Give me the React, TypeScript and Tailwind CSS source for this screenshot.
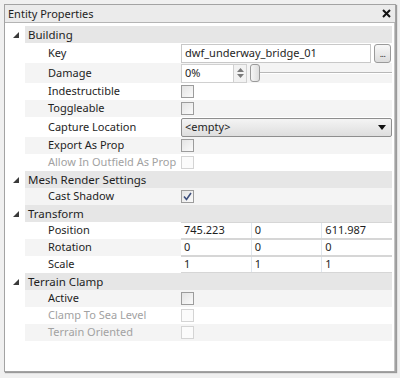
import React from "react";

type Row =
  | { kind: "cat"; label: string }
  | { kind: "prop"; label: string; value: React.ReactNode; disabled?: boolean; h?: number };

function Check({ checked, disabled }: { checked?: boolean; disabled?: boolean }) {
  return (
    <div
      className={
        "w-[13px] h-[13px] border flex items-center justify-center " +
        (disabled
          ? "border-[#d4d4d4] bg-[#fbfbfb]"
          : "border-[#9c9c9c] bg-gradient-to-br from-[#e4e4e4] to-[#fafafa]")
      }
    >
      {checked && (
        <svg width="9" height="9" viewBox="0 0 9 9">
          <path d="M1 4.5 L3.5 7.5 L8 1" fill="none" stroke="#3d4f7c" strokeWidth="1.6" />
        </svg>
      )}
    </div>
  );
}

function Cells({ values }: { values: string[] }) {
  return (
    <div className="flex h-full w-full bg-white border-y border-[#d6d6d6]">
      {values.map((v, i) => (
        <div
          key={i}
          className={
            "flex-1 flex items-center pl-[3px] " + (i > 0 ? "border-l border-[#dfe6ee]" : "")
          }
        >
          {v}
        </div>
      ))}
    </div>
  );
}

export default function App() {
  const rows: Row[] = [
    { kind: "cat", label: "Building" },
    {
      kind: "prop",
      label: "Key",
      h: 20,
      value: (
        <div className="flex items-center h-full gap-[3px] pr-[1px]">
          <div className="flex-1 h-[19px] bg-white border border-[#c8c8c8] flex items-center pl-[3px]">
            dwf_underway_bridge_01
          </div>
          <div className="w-[17px] h-[19px] border border-[#9a9a9a] rounded-[3px] bg-gradient-to-b from-[#f8f8f8] to-[#dcdcdc] flex items-end justify-center pb-[4px] text-[9px] leading-none tracking-[-0.5px]">
            ...
          </div>
        </div>
      ),
    },
    {
      kind: "prop",
      label: "Damage",
      h: 20,
      value: (
        <div className="flex items-center h-full">
          <div className="w-[66px] h-[19px] bg-white border border-[#d0d0d0] flex items-center pl-[3px] justify-between">
            <span>0%</span>
            <div className="w-[13px] h-[17px] border-l border-[#d0d0d0] bg-[#f2f2f2] flex flex-col items-center justify-center gap-[2px]">
              <svg width="7" height="4" viewBox="0 0 7 4"><path d="M0 4 L3.5 0 L7 4Z" fill="#7a7a7a" /></svg>
              <svg width="7" height="4" viewBox="0 0 7 4"><path d="M0 0 L3.5 4 L7 0Z" fill="#7a7a7a" /></svg>
            </div>
          </div>
          <div className="w-[3px]" />
          <div className="w-[10px] h-[18px] rounded-[3px] border border-[#9a9a9a] bg-gradient-to-r from-[#f6f6f6] to-[#dedede]" />
          <div className="flex-1 h-[2px] border-t border-[#b8b8b8] bg-white" />
        </div>
      ),
    },
    { kind: "prop", label: "Indestructible", value: <Check /> },
    { kind: "prop", label: "Toggleable", value: <Check /> },
    {
      kind: "prop",
      label: "Capture Location",
      h: 20,
      value: (
        <div className="h-[19px] border border-[#8e8e8e] rounded-[2px] bg-gradient-to-b from-[#f4f4f4] to-[#dedede] flex items-center justify-between pl-[3px] pr-[5px]">
          <span>&lt;empty&gt;</span>
          <svg width="8" height="5" viewBox="0 0 8 5"><path d="M0 0 L8 0 L4 5Z" fill="#111" /></svg>
        </div>
      ),
    },
    { kind: "prop", label: "Export As Prop", value: <Check /> },
    { kind: "prop", label: "Allow In Outfield As Prop", disabled: true, value: <Check disabled /> },
    { kind: "cat", label: "Mesh Render Settings" },
    { kind: "prop", label: "Cast Shadow", value: <Check checked /> },
    { kind: "cat", label: "Transform" },
    { kind: "prop", label: "Position", value: <Cells values={["745.223", "0", "611.987"]} /> },
    { kind: "prop", label: "Rotation", value: <Cells values={["0", "0", "0"]} /> },
    { kind: "prop", label: "Scale", value: <Cells values={["1", "1", "1"]} /> },
    { kind: "cat", label: "Terrain Clamp" },
    { kind: "prop", label: "Active", value: <Check /> },
    { kind: "prop", label: "Clamp To Sea Level", disabled: true, value: <Check disabled /> },
    { kind: "prop", label: "Terrain Oriented", disabled: true, value: <Check disabled /> },
  ];

  let propIndex = -1;

  return (
    <div
      className="w-[400px] h-[378px] bg-[#f0f0f0] pt-[4px] pl-[4px] pr-[4px] pb-[6px] text-[11px] text-[#1e1e1e]"
      style={{ fontFamily: '"Noto Sans", "Open Sans", sans-serif' }}
    >
      <div className="h-full flex flex-col border border-[#a3a3a3] bg-white shadow-[1px_1px_1px_#9a9a9a]">
        <div className="h-[18px] shrink-0 bg-[#ebebeb] border-b border-[#b4b4b4] flex items-center justify-between pl-[3px] pr-[4px]">
          <span className="leading-none">Entity Properties</span>
          <svg width="9" height="9" viewBox="0 0 9 9">
            <path d="M1 1 L8 8 M8 1 L1 8" stroke="#111" strokeWidth="2" />
          </svg>
        </div>
        <div className="flex-1 flex flex-col pt-[3px] pr-[2px] border-r border-[#c4c4c4]">
          {rows.map((r, i) => {
            if (r.kind === "cat") {
              return (
                <div key={i} className="h-[17px] flex shrink-0">
                  <div className="w-[20px] flex items-center justify-center pl-[1px]">
                    <svg width="6" height="6" viewBox="0 0 6 6"><path d="M6 0 L6 6 L0 6Z" fill="#3a3a3a" /></svg>
                  </div>
                  <div className="flex-1 bg-[#e6e6e6] flex items-center pl-[3px] text-[11.5px]">{r.label}</div>
                </div>
              );
            }
            propIndex++;
            const alt = propIndex % 2 === 1;
            return (
              <div key={i} className={"flex shrink-0 " + (r.h === 20 ? "h-[20px]" : "h-[17px]")}>
                <div className="w-[20px]" />
                <div
                  className={
                    "w-[155px] flex items-center pl-[23px] whitespace-nowrap overflow-hidden " +
                    (alt ? "bg-[#f4f4f4] " : "bg-white ") +
                    (r.disabled ? "text-[#a2a2a2]" : "")
                  }
                >
                  {r.label}
                </div>
                <div
                  className={
                    "flex-1 flex flex-col justify-center pl-[1px] " + (alt ? "bg-[#f4f4f4]" : "bg-white")
                  }
                >
                  {r.value}
                </div>
              </div>
            );
          })}
        </div>
      </div>
    </div>
  );
}
